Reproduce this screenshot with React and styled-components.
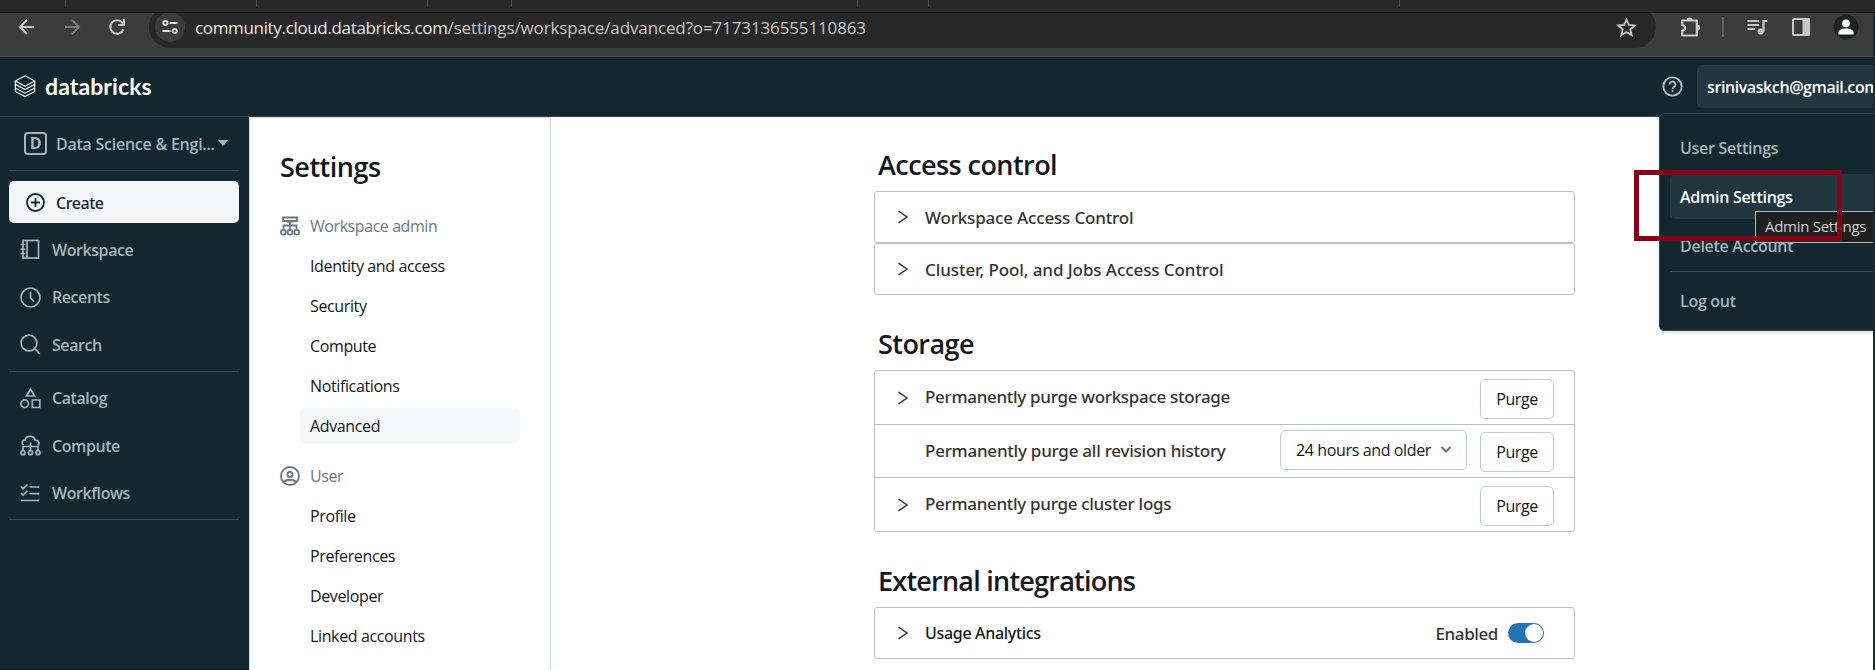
import React from 'react';
import styled, { createGlobalStyle } from 'styled-components';

const Global = createGlobalStyle`
  * { box-sizing: border-box; }
  body { margin: 0; background: #fff; overflow: hidden; }
`;

const Page = styled.div`
  position: relative;
  display: flex;
  flex-direction: column;
  width: 1875px;
  height: 670px;
  overflow: hidden;
  font-family: 'Open Sans', 'Liberation Sans', sans-serif;
  font-size: 16px;
  color: #11171c;
`;

/* ---------- browser chrome ---------- */

const TabStrip = styled.div`
  display: flex;
  flex: none;
  height: 13px;
  background: #282828;
  border-bottom: 1px solid #1e1e1e;
`;

const TabGap = styled.div`
  width: ${(p) => p.$width}px;
  height: 7px;
  border-right: 1px solid #464646;
`;

const BrowserBar = styled.div`
  display: flex;
  flex: none;
  align-items: flex-start;
  height: 44px;
  background: #3c3c3c;
  border-bottom: 1px solid #4b4b4b;
  overflow: hidden;
`;

const NavButtons = styled.div`
  display: flex;
  align-items: center;
  gap: 21px;
  width: 149px;
  height: 28px;
  padding-left: 15px;
`;

const AddressBar = styled.div`
  display: flex;
  align-items: center;
  width: 1507px;
  height: 42px;
  margin-top: -7px;
  padding: 0 18px 0 6px;
  border-radius: 21px;
  background: #282828;
`;

const SiteInfo = styled.div`
  display: grid;
  place-items: center;
  width: 30px;
  height: 30px;
  border-radius: 50%;
  background: #3c3c3c;
`;

const Url = styled.div`
  flex: 1;
  margin-left: 10px;
  color: #c7c7c7;
  font-size: 17px;
  letter-spacing: -0.13px;
  white-space: nowrap;
`;

const Domain = styled.span`
  color: #e8e8e8;
  letter-spacing: -0.34px;
`;

const BrowserActions = styled.div`
  display: flex;
  align-items: center;
  height: 27px;
  padding-left: 23px;
`;

const ActionRule = styled.div`
  width: 2px;
  height: 20px;
  margin: 0 23px 0 20px;
  background: #5f5f5f;
`;

const PanelButton = styled.div`
  display: flex;
  margin: 0 22px 0 23px;
`;

/* ---------- product header ---------- */

const Header = styled.header`
  display: flex;
  flex: none;
  align-items: center;
  justify-content: space-between;
  height: 60px;
  padding-left: 14px;
  background: #12272e;
  border-bottom: 1px solid #34464e;
`;

const Brand = styled.div`
  display: flex;
  align-items: center;
  gap: 9px;
  padding-bottom: 1px;
  color: #fff;
  font: 700 23px/26px Lato, sans-serif;
  letter-spacing: 0.1px;
`;

const Account = styled.div`
  display: flex;
  align-items: center;
  gap: 14px;
`;

const AccountButton = styled.div`
  width: 178px;
  height: 43px;
  padding-left: 10px;
  overflow: hidden;
  border-radius: 5px 0 0 5px;
  background: #203741;
  color: #fff;
  font-weight: 600;
  line-height: 45px;
  letter-spacing: -0.41px;
  white-space: nowrap;
`;

/* ---------- sidebar ---------- */

const Body = styled.div`
  display: flex;
  flex: 1;
  min-height: 0;
`;

const Sidebar = styled.aside`
  width: 249px;
  padding: 0 10px 0 9px;
  background: #12272e;
  border-bottom: 1px solid #0b181d;
  color: #a6b5bd;
  font-weight: 600;
  letter-spacing: -0.43px;
`;

const Picker = styled.div`
  display: flex;
  align-items: center;
  height: 53px;
  padding-left: 15px;
  letter-spacing: -0.25px;
  white-space: nowrap;
`;

const PickerBadge = styled.div`
  display: grid;
  place-items: center;
  width: 23px;
  height: 23px;
  margin-right: 9px;
  border: 2px solid #a6b5bd;
  border-radius: 4px;
  font-size: 16px;
  font-weight: 700;
  line-height: 19px;
`;

const Caret = styled.div`
  margin: 0 0 1px 3px;
  border: 5px solid transparent;
  border-top: 6px solid #a6b5bd;
  border-bottom: 0;
`;

const Rule = styled.div`
  height: 1px;
  margin: ${(p) => p.$margin || '0'};
  background: #36474f;
`;

const CreateButton = styled.div`
  display: flex;
  align-items: center;
  gap: 11px;
  height: 42px;
  margin: 10px 0 3px;
  padding-left: 17px;
  border-radius: 5px;
  background: #f3f5f7;
  color: #12272e;
  font-family: 'Noto Sans', sans-serif;
  font-weight: 500;
  line-height: 20px;
  letter-spacing: -0.45px;
`;

const CreateLabel = styled.span`
  padding-top: 2px;
`;

const SideItem = styled.div`
  display: flex;
  align-items: center;
  gap: 11px;
  height: 47.5px;
  padding-left: 11px;
`;

/* ---------- settings navigation ---------- */

const SettingsNav = styled.nav`
  width: 302px;
  padding: 30px 30px 0;
  border: solid #d1d9e1;
  border-width: 1px 1px 0 1px;
`;

const NavTitle = styled.h1`
  margin: 0 0 23px;
  font-size: 27px;
  font-weight: 600;
  line-height: 37px;
  letter-spacing: -0.5px;
`;

const NavGroup = styled.div`
  margin-bottom: 15px;
`;

const GroupTitle = styled.div`
  display: flex;
  align-items: center;
  gap: 10px;
  height: 35px;
  color: #6b7a86;
  letter-spacing: -0.43px;
`;

const NavItem = styled.div`
  height: 35px;
  margin: 5px 0 0 20px;
  padding-left: 10px;
  border-radius: 5px;
  background: ${(p) => (p.$active ? '#f5f6f8' : 'transparent')};
  line-height: 36px;
  letter-spacing: ${(p) => p.$track || '-0.37px'};
`;

/* ---------- settings content ---------- */

const Main = styled.main`
  width: 701px;
  margin-left: 323px;
`;

const Section = styled.section`
  padding-top: ${(p) => p.$top}px;
`;

const SectionTitle = styled.h2`
  height: 37px;
  margin: 0 0 8px 4px;
  font-size: 27px;
  font-weight: 600;
  line-height: 37px;
  letter-spacing: ${(p) => p.$track || '-0.56px'};
`;

const Card = styled.div`
  border: 1px solid #bdbfc1;
  border-radius: 3px;
`;

const Row = styled.div`
  display: flex;
  align-items: center;
  height: ${(p) => p.$height}px;
  padding: 0 ${(p) => p.$right || 20}px 0 22px;
  & + & { border-top: 1px solid #bdbfc1; }
`;

const ChevronSlot = styled.div`
  display: flex;
  width: 28px;
`;

const RowTitle = styled.div`
  flex: 1;
  margin-top: ${(p) => p.$drop || '-3px'};
  color: ${(p) => (p.$small ? '#11171c' : '#333')};
  font-family: 'Noto Sans', sans-serif;
  font-size: ${(p) => (p.$small ? 16 : 17)}px;
  font-weight: 500;
  letter-spacing: ${(p) => p.$track || '-0.3px'};
  white-space: nowrap;
`;

const Button = styled.button`
  width: 74px;
  height: 40px;
  margin-top: ${(p) => p.$drop || '0'};
  padding: 0;
  border: 1px solid #c0cdd8;
  border-radius: 5px;
  background: #fff;
  color: #11171c;
  font: 16px 'Open Sans', sans-serif;
  letter-spacing: -0.4px;
`;

const Select = styled.div`
  display: flex;
  align-items: center;
  justify-content: space-between;
  width: 187px;
  height: 40px;
  margin: -3px 13px 0 0;
  padding: 0 14px 0 15px;
  border: 1px solid #c0cdd8;
  border-radius: 5px;
  letter-spacing: -0.37px;
  white-space: nowrap;
`;

const ToggleLabel = styled.div`
  margin-right: 10px;
  color: #333;
  font-family: 'Noto Sans', sans-serif;
  font-size: 17px;
  font-weight: 500;
  letter-spacing: -0.4px;
`;

const Toggle = styled.div`
  display: flex;
  justify-content: flex-end;
  width: 36px;
  height: 20px;
  padding: 1px;
  border-radius: 10px;
  background: #2272b4;
`;

const Knob = styled.div`
  width: 18px;
  height: 18px;
  border-radius: 50%;
  background: #fff;
`;

/* ---------- overlays ---------- */

const Menu = styled.div`
  position: absolute;
  top: 113px;
  left: 1659px;
  width: 230px;
  height: 218px;
  padding: 11px 0 0 10px;
  border: 1px solid #34464e;
  border-radius: 5px;
  background: #12272e;
  box-shadow: 0 2px 3px rgba(0, 0, 0, 0.12);
`;

const MenuItem = styled.div`
  height: 45px;
  margin-bottom: 4px;
  padding-left: 10px;
  border-radius: 5px;
  background: ${(p) => (p.$active ? '#203741' : 'transparent')};
  color: ${(p) => (p.$active ? '#fff' : '#a6b5bd')};
  font-weight: 600;
  line-height: 46px;
  letter-spacing: -0.28px;
`;

const Tooltip = styled.div`
  position: absolute;
  top: 211px;
  left: 1755px;
  width: 140px;
  height: 32px;
  padding-left: 9px;
  border: 1px solid #b9b9b9;
  background: #1f1f1f;
  color: #d2d2d2;
  font-size: 15px;
  line-height: 29px;
  letter-spacing: -0.28px;
`;

const Highlight = styled.div`
  position: absolute;
  top: 170px;
  left: 1634px;
  width: 208px;
  height: 71px;
  border: 5px solid #880015;
`;

const WindowEdge = styled.div`
  position: absolute;
  top: 13px;
  right: 0;
  width: 2px;
  height: 657px;
  background: #1b2a31;
`;

/* ---------- icons ---------- */

const Icon = ({ w = 21, h = w, box = `0 0 ${w} ${h}`, sw = 1.7, color = 'currentColor', children }) => (
  <svg width={w} height={h} viewBox={box} fill="none" stroke={color} strokeWidth={sw}>
    {children}
  </svg>
);

const BackIcon = () => (
  <Icon w={24} color="#c7c7c7" sw={2}><path d="M19 12H5.5M12 5l-7 7 7 7" /></Icon>
);
const ForwardIcon = () => (
  <Icon w={24} color="#7b7b7b" sw={2}><path d="M5 12h13.5M12 5l7 7-7 7" /></Icon>
);
const ReloadIcon = () => (
  <Icon w={24} color="#c7c7c7" sw={2.1}>
    <path d="M18.4 14.3A6.8 6.8 0 1 1 17.2 7.6l1.5 1.6" />
    <path d="M19 4v6h-6" />
  </Icon>
);
const TuneIcon = () => (
  <Icon w={18} color="#dedede" sw={1.9}>
    <circle cx="4.4" cy="5" r="2.1" /><path d="M8.5 5H16.5M1.5 13h8" /><circle cx="13.7" cy="13" r="2.1" />
  </Icon>
);
const StarIcon = () => (
  <Icon w={23} color="#c7c7c7" sw={1.8}>
    <path d="M11.5 3.5l2.3 5.5 6 .5-4.5 3.9 1.4 5.8-5.2-3.1-5.2 3.1 1.4-5.8L3.2 9.5l6-.5z" />
  </Icon>
);
const PuzzleIcon = () => (
  <Icon w={23} color="#c7c7c7" sw={2.2}>
    <path strokeLinejoin="round" d="M3.2 5.5h14.600v15H3.2v-4.700c3.800-.8 3.800-5 0-5.800z" />
    <path fill="#c7c7c7" stroke="none" d="M7.600 5.500a3 3 0 0 1 6 0zM18 9.800a3 3 0 0 1 0 6z" />
  </Icon>
);
const MediaIcon = () => (
  <Icon w={21} h={18} color="#c7c7c7" sw={2.2}>
    <path d="M.5 3h11.5M.5 7h11.5M.5 11h7.5M20.5 3h-4v10.5" />
    <circle cx="13.7" cy="13.500" r="3.100" fill="#c7c7c7" stroke="none" />
  </Icon>
);
const PanelIcon = () => (
  <Icon w={20} color="#c7c7c7" sw={2}>
    <rect x="2" y="2" width="16" height="16" rx="1" /><path fill="#c7c7c7" d="M12.5 2.5H18v15h-5.500z" />
  </Icon>
);
const ProfileIcon = () => (
  <svg width="26" height="26" viewBox="0 0 26 26">
    <circle cx="13" cy="13" r="12.5" fill="#1f2122" />
    <circle cx="13" cy="9.3" r="3.9" fill="#fff" />
    <path fill="#fff" d="M5.5 20.5v-2.3c0-2.5 4-3.7 7.5-3.7s7.5 1.2 7.5 3.7v2.3z" />
  </svg>
);
const LogoIcon = () => (
  <Icon w={22} h={24} color="#fff" sw={1.1}>
    <path d="M1.3 7L11 1.8 20.700 7 11 12.300z" />
    <path d="M1.300 7v3.300L11 15.600l9.700-5.300V7" />
    <path d="M1.300 10.300v3.600L11 19.200l9.700-5.300v-3.600M1.300 13.900v3.500L11 22.600l9.700-5.200v-3.500" />
  </Icon>
);
const HelpIcon = () => (
  <Icon color="#b4c0c7" sw={1.8}>
    <circle cx="10.5" cy="10.5" r="9.2" />
    <path d="M7.6 8.4a2.9 2.9 0 1 1 4.4 2.5c-1 .6-1.500 1-1.500 2.100" /><path d="M10.500 14.200v1.900" />
  </Icon>
);
const PlusIcon = () => (
  <Icon w={19} sw={1.8}><circle cx="9.5" cy="9.5" r="8.5" /><path d="M9.5 5v9M5 9.500h9" /></Icon>
);
const NotebookIcon = () => (
  <Icon>
    <rect x="3" y="1.500" width="15.500" height="17.500" /><path d="M7 1.500v17.500M.5 5.500h4.700M.5 10h4.700M.5 14.600h4.700" />
  </Icon>
);
const ClockIcon = () => (
  <Icon><circle cx="10.5" cy="10.5" r="9.5" /><path d="M10.5 4.5v6.500l3.600 3.600" /></Icon>
);
const SearchIcon = () => (
  <Icon><circle cx="9" cy="9" r="7.9" /><path d="M14.5 14.5l5.300 5.300" /></Icon>
);
const CatalogIcon = () => (
  <Icon h={22}>
    <path d="M10.5 2l4 7h-8z" /><circle cx="4.700" cy="16.700" r="3.800" /><path d="M12.300 13h7.500v7.500h-7.500z" />
  </Icon>
);
const ComputeIcon = () => (
  <Icon>
    <path d="M3.5 10.2C1.3 9 1.7 5.2 5 5.2 6 .2 14 .2 15.300 5.200c4-.2 4.800 3.800 2.300 5" />
    <path d="M3 15v-3.500h15V15M10.500 7.500V15" />
    <circle cx="3" cy="17.700" r="2" /><circle cx="10.500" cy="17.700" r="2" /><circle cx="18" cy="17.700" r="2" />
  </Icon>
);
const WorkflowsIcon = () => (
  <Icon>
    <path d="M1 3.700l2 2L7.500 1.500M1 10l2 2L7.500 7.800M9.500 4H19.500M9.500 10.700H19.500M1 17.500H19.500" />
  </Icon>
);
const OrgIcon = () => (
  <Icon w={20} color="#66788a" sw={1.8}>
    <path d="M3 5V1.500h14V5zM10 5v8M3.500 13.500V9.500h13v4M6.500 5.500h7" />
    <circle cx="3.300" cy="16.200" r="2.400" /><circle cx="10" cy="16.200" r="2.400" /><circle cx="16.700" cy="16.200" r="2.400" />
  </Icon>
);
const UserIcon = () => (
  <Icon w={20} color="#66788a" sw={1.9}>
    <circle cx="10" cy="10" r="9" /><circle cx="10" cy="8.5" r="2.600" /><path d="M3.800 16c3.500-3 9-3 12.400 0" />
  </Icon>
);
const RightChevron = () => (
  <Icon w={12} h={14} color="#333" sw={1.5}><path d="M1.5 1.2l8.5 5.8-8.5 5.8" /></Icon>
);
const DownChevron = () => (
  <Icon w={12} h={10} color="#5f7281" sw={2}><path d="M1.5 2l4.5 4.5L10.5 2" /></Icon>
);

/* ---------- data ---------- */

const tabGaps = [66, 191, 171, 84, 346, 71, 471];

const primaryItems = [
  ['Workspace', NotebookIcon],
  ['Recents', ClockIcon],
  ['Search', SearchIcon],
];
const productItems = [
  ['Catalog', CatalogIcon],
  ['Compute', ComputeIcon],
  ['Workflows', WorkflowsIcon],
];

const SideLinks = ({ items }) =>
  items.map(([label, Glyph]) => (
    <SideItem key={label}><Glyph />{label}</SideItem>
  ));

export default function App() {
  return (
    <Page>
      <Global />
      <TabStrip>{tabGaps.map((w, i) => <TabGap key={i} $width={w} />)}</TabStrip>
      <BrowserBar>
        <NavButtons><BackIcon /><ForwardIcon /><ReloadIcon /></NavButtons>
        <AddressBar>
          <SiteInfo><TuneIcon /></SiteInfo>
          <Url><Domain>community.cloud.databricks.com</Domain>/settings/workspace/advanced?o=7173136555110863</Url>
          <StarIcon />
        </AddressBar>
        <BrowserActions>
          <PuzzleIcon />
          <ActionRule />
          <MediaIcon />
          <PanelButton><PanelIcon /></PanelButton>
          <ProfileIcon />
        </BrowserActions>
      </BrowserBar>

      <Header>
        <Brand><LogoIcon />databricks</Brand>
        <Account>
          <HelpIcon />
          <AccountButton>srinivaskch@gmail.com</AccountButton>
        </Account>
      </Header>

      <Body>
        <Sidebar>
          <Picker>
            <PickerBadge>D</PickerBadge>
            Data Science &amp; Engi...
            <Caret />
          </Picker>
          <Rule />
          <CreateButton><PlusIcon /><CreateLabel>Create</CreateLabel></CreateButton>
          <SideLinks items={primaryItems} />
          <Rule $margin="2px 0 3px" />
          <SideLinks items={productItems} />
          <Rule $margin="2px 0 0" />
        </Sidebar>

        <SettingsNav>
          <NavTitle>Settings</NavTitle>
          <NavGroup>
            <GroupTitle><OrgIcon />Workspace admin</GroupTitle>
            <NavItem>Identity and access</NavItem>
            <NavItem>Security</NavItem>
            <NavItem>Compute</NavItem>
            <NavItem>Notifications</NavItem>
            <NavItem $active>Advanced</NavItem>
          </NavGroup>
          <NavGroup>
            <GroupTitle><UserIcon />User</GroupTitle>
            <NavItem>Profile</NavItem>
            <NavItem>Preferences</NavItem>
            <NavItem>Developer</NavItem>
            <NavItem>Linked accounts</NavItem>
          </NavGroup>
        </SettingsNav>

        <Main>
          <Section $top={29}>
            <SectionTitle>Access control</SectionTitle>
            <Card>
              <Row $height={50}>
                <ChevronSlot><RightChevron /></ChevronSlot>
                <RowTitle $drop="0" $track="-0.17px">Workspace Access Control</RowTitle>
              </Row>
            </Card>
            <Card>
              <Row $height={50}>
                <ChevronSlot><RightChevron /></ChevronSlot>
                <RowTitle $drop="0" $track="-0.08px">Cluster, Pool, and Jobs Access Control</RowTitle>
              </Row>
            </Card>
          </Section>

          <Section $top={30}>
            <SectionTitle>Storage</SectionTitle>
            <Card>
              <Row $height={53}>
                <ChevronSlot><RightChevron /></ChevronSlot>
                <RowTitle>Permanently purge workspace storage</RowTitle>
                <Button $drop="3px">Purge</Button>
              </Row>
              <Row $height={53}>
                <ChevronSlot />
                <RowTitle $drop="-1px" $track="-0.24px">Permanently purge all revision history</RowTitle>
                <Select>24 hours and older<DownChevron /></Select>
                <Button $drop="2px">Purge</Button>
              </Row>
              <Row $height={54}>
                <ChevronSlot><RightChevron /></ChevronSlot>
                <RowTitle>Permanently purge cluster logs</RowTitle>
                <Button $drop="3px">Purge</Button>
              </Row>
            </Card>
          </Section>

          <Section $top={30}>
            <SectionTitle $track="-0.77px">External integrations</SectionTitle>
            <Card>
              <Row $height={50} $right={30}>
                <ChevronSlot><RightChevron /></ChevronSlot>
                <RowTitle $small $drop="0" $track="-0.32px">Usage Analytics</RowTitle>
                <ToggleLabel>Enabled</ToggleLabel>
                <Toggle><Knob /></Toggle>
              </Row>
            </Card>
          </Section>
        </Main>
      </Body>

      <Menu>
        <MenuItem>User Settings</MenuItem>
        <MenuItem $active>Admin Settings</MenuItem>
        <MenuItem>Delete Account</MenuItem>
        <Rule $margin="-1px 0 6px" />
        <MenuItem>Log out</MenuItem>
      </Menu>
      <Tooltip>Admin Settings</Tooltip>
      <Highlight />
      <WindowEdge />
    </Page>
  );
}
